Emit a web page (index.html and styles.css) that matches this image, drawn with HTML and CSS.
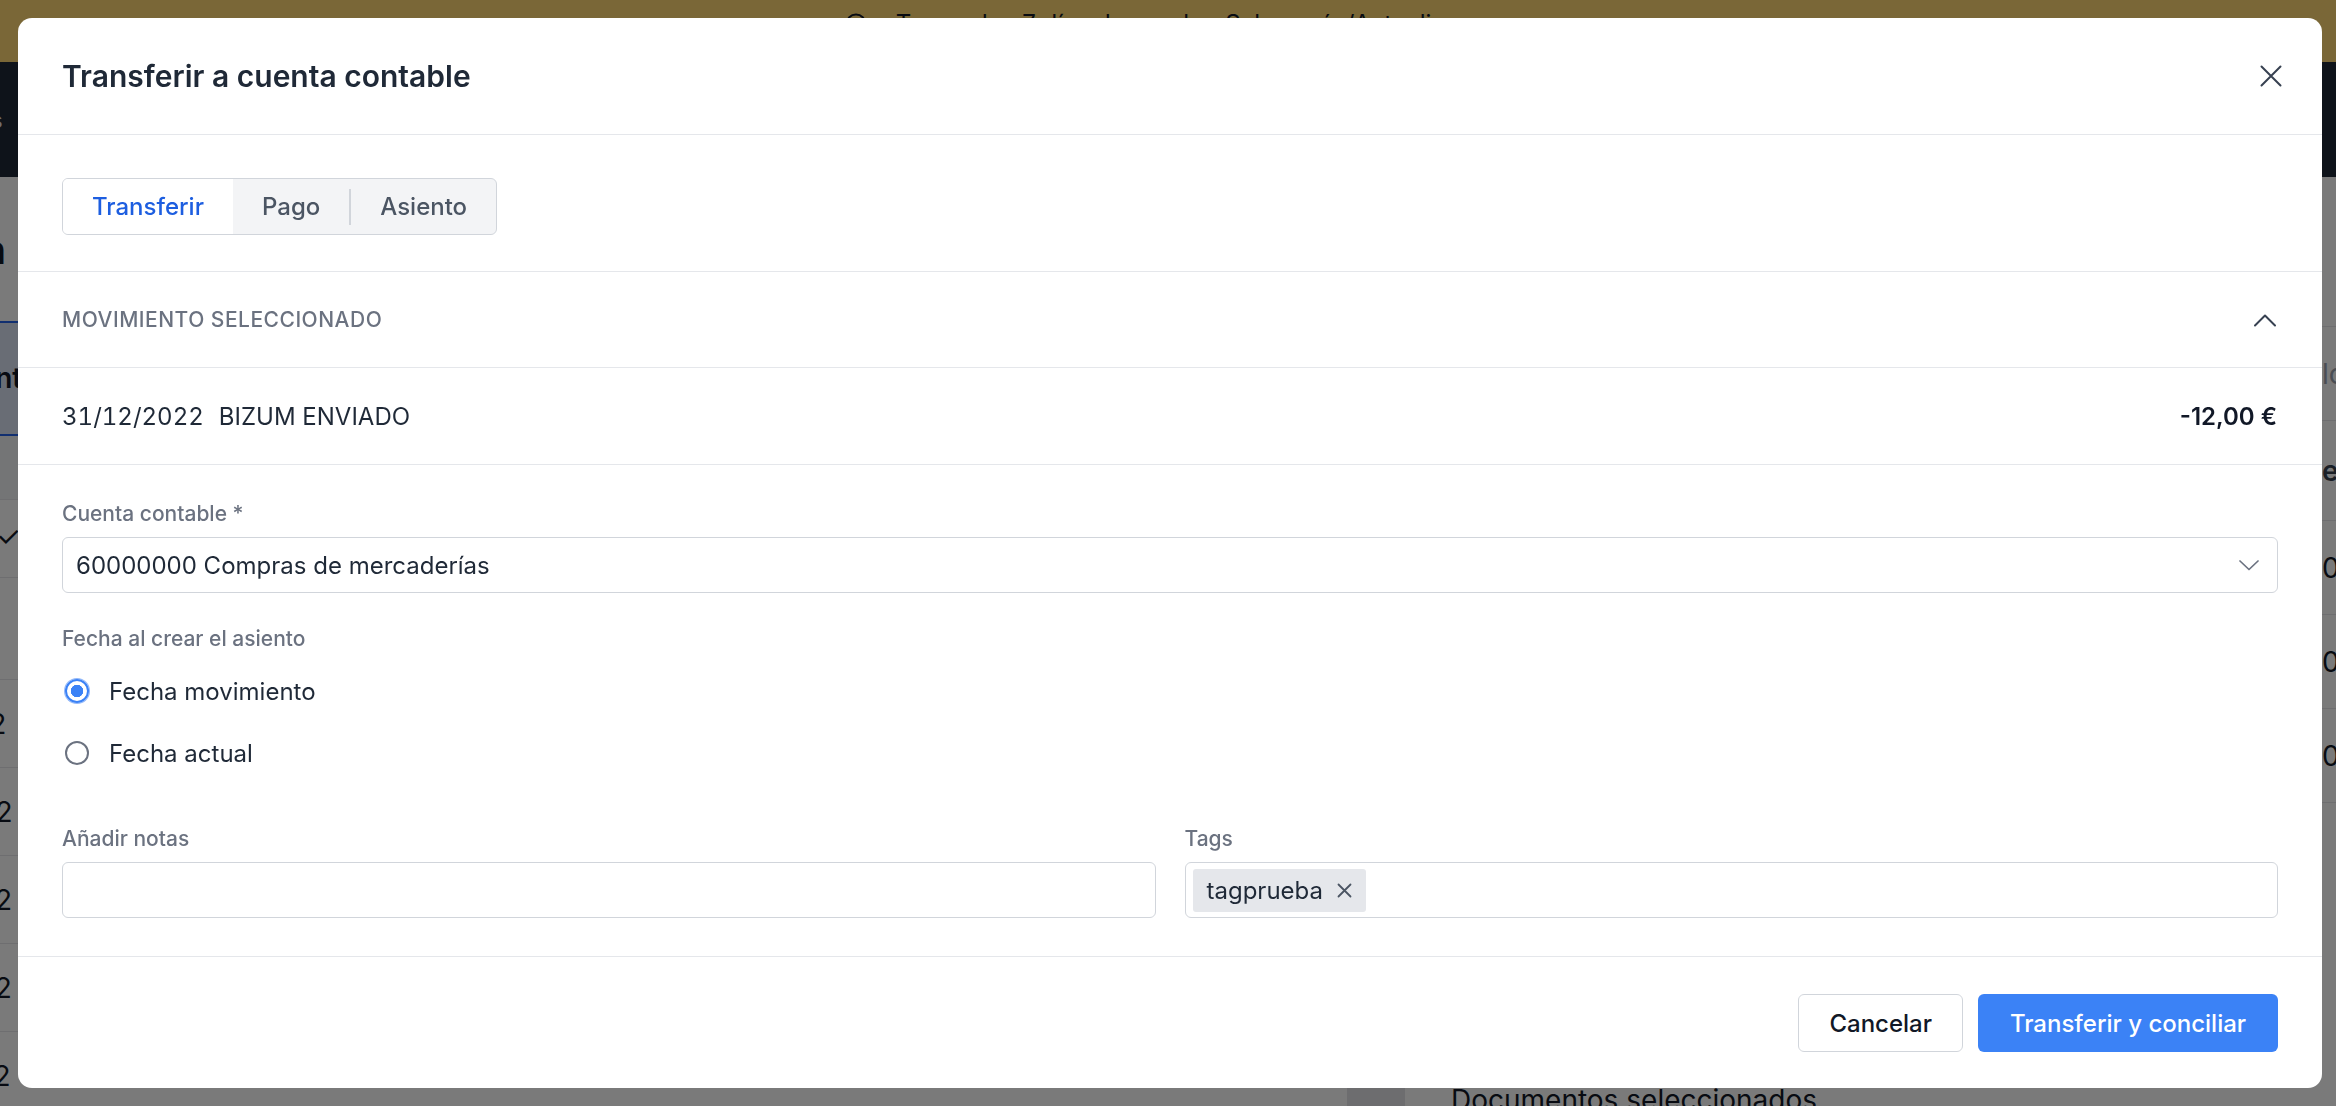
FILE: index.html
```html
<!DOCTYPE html>
<html lang="es">
<head>
<meta charset="UTF-8">
<meta name="viewport" content="width=device-width, initial-scale=1.0">
<title>Transferir a cuenta contable</title>
<link rel="stylesheet" href="styles.css">
</head>
<body>
    <!-- page behind the dialog -->
    <div class="page">
        <div class="banner">
            <svg class="banner-icon" width="22" height="22" viewBox="0 0 22 22"><circle cx="11" cy="11" r="9.5" fill="none" stroke="#111827" stroke-width="2"/></svg>
            <span>Te quedan 7 días de prueba. Saber más/Actualizar</span>
        </div>
        <nav class="topnav">
            <span class="nav-first">Movimientos</span>
            <span>Facturas</span>
            <span>Contabilidad</span>
        </nav>
        <div class="content">
            <div class="left-col">
                <h1 class="page-title"><span>Conciliación</span></h1>
                <div class="band">Movimient</div>
                <div class="row head"></div>
                <div class="row check">✓</div>
                <div class="row blank"></div>
                <div class="row">31/12/2022</div>
                <div class="row">30/12/2022</div>
                <div class="row">29/12/2022</div>
                <div class="row">28/12/2022</div>
                <div class="row">27/12/2022</div>
            </div>
            <div class="gutter"></div>
            <div class="right-col">
                <div class="rrow r1"></div>
                <div class="rrow r2 light">lc</div>
                <div class="rrow r3">er</div>
                <div class="rrow r4">00</div>
                <div class="rrow r4">00</div>
                <div class="rrow r4">00</div>
                <div class="docs">Documentos seleccionados</div>
            </div>
        </div>
    </div>

    <div class="overlay"></div>

    <div class="modal">
        <div class="modal-header">
            <h2>Transferir a cuenta contable</h2>
            <svg class="close" width="22" height="22" viewBox="0 0 22 22"><path d="M1.5 1.5 L20.5 20.5 M20.5 1.5 L1.5 20.5" stroke="#374151" stroke-width="2" stroke-linecap="round"/></svg>
        </div>

        <div class="tabs-section">
            <div class="tabs">
                <div class="tab active">Transferir</div>
                <div class="tab">Pago</div>
                <div class="tab-sep"></div>
                <div class="tab">Asiento</div>
            </div>
        </div>

        <div class="collapse-head">
            <span>Movimiento seleccionado</span>
            <svg width="24" height="14" viewBox="0 0 24 14"><polyline points="2,12.5 12,2.5 22,12.5" fill="none" stroke="#374151" stroke-width="2" stroke-linecap="round" stroke-linejoin="round"/></svg>
        </div>

        <div class="movement">
            <div><span class="date">31/12/2022</span>BIZUM ENVIADO</div>
            <div class="amount">-12,00 €</div>
        </div>

        <div class="form">
            <label class="field-label">Cuenta contable *</label>
            <div class="select">
                <span>60000000 Compras de mercaderías</span>
                <svg width="20" height="11" viewBox="0 0 20 11"><polyline points="1,1 10,9.5 19,1" fill="none" stroke="#6b7280" stroke-width="1.7" stroke-linecap="round" stroke-linejoin="round"/></svg>
            </div>

            <label class="field-label date-label">Fecha al crear el asiento</label>
            <div class="radio-list">
                <div class="radio-item"><span class="radio checked"></span>Fecha movimiento</div>
                <div class="radio-item"><span class="radio"></span>Fecha actual</div>
            </div>

            <div class="two-cols">
                <div>
                    <label class="field-label">Añadir notas</label>
                    <div class="input"></div>
                </div>
                <div>
                    <label class="field-label">Tags</label>
                    <div class="input tags">
                        <span class="chip">tagprueba
                            <svg width="15" height="15" viewBox="0 0 15 15"><path d="M1.5 1.5 L13.5 13.5 M13.5 1.5 L1.5 13.5" stroke="#4b5563" stroke-width="1.8" stroke-linecap="round"/></svg>
                        </span>
                    </div>
                </div>
            </div>
        </div>

        <div class="modal-footer">
            <button class="btn">Cancelar</button>
            <button class="btn primary">Transferir y conciliar</button>
        </div>
    </div>
</body>
</html>
```

FILE: styles.css
```css
body {
    font-family: Inter, Roboto, "Liberation Sans", Arial, sans-serif;
    margin: 0;
    padding: 0;
    color: #111827;
    overflow: hidden;
}

/* page under the dialog */
.page {
    height: 1106px;
    background-color: white;
}

.banner {
    height: 62px;
    box-sizing: border-box;
    padding: 6px 24px 0 0;
    background-color: #fed874;
    display: flex;
    justify-content: center;
    align-items: flex-start;
    gap: 29px;
    font-size: 24px;
    line-height: 36px;
}

.banner-icon {
    margin-top: 7px;
}

.topnav {
    height: 115px;
    background-color: #1f2937;
    color: #e5e7eb;
    display: flex;
    align-items: center;
    gap: 40px;
    font-size: 22px;
}

.nav-first {
    margin-left: -130px;
}

.content {
    display: flex;
}

.left-col {
    width: 1347px;
    flex-shrink: 0;
    overflow: hidden;
}

.page-title {
    margin: 0;
    width: 6px;
    height: 144px;
    display: flex;
    justify-content: flex-end;
    align-items: center;
    white-space: nowrap;
    font-size: 40px;
}

.band {
    height: 115px;
    box-sizing: border-box;
    background-color: #dbe4f5;
    border-top: 2px solid #2563eb;
    border-bottom: 2px solid #2563eb;
    font-size: 28px;
    font-weight: 600;
    line-height: 110px;
    margin-left: -120px;
}

.row {
    height: 88px;
    box-sizing: border-box;
    border-bottom: 1px solid #e5e7eb;
    font-size: 28px;
    line-height: 88px;
    margin-left: -140px;
}

.row.head {
    height: 64px;
    background-color: #f3f4f6;
}

.row.check {
    height: 78px;
    line-height: 72px;
    margin-left: -4px;
}

.row.blank {
    height: 102px;
}

.gutter {
    width: 58px;
    flex-shrink: 0;
    background-color: #e3e4e8;
}

.right-col {
    flex-grow: 1;
    min-width: 0;
}

.rrow {
    box-sizing: border-box;
    border-bottom: 1px solid #e5e7eb;
    padding-left: 917px;
    font-size: 28px;
    height: 94px;
    display: flex;
    align-items: center;
    white-space: nowrap;
}

.r1 { height: 150px; }
.r3 { height: 100px; font-weight: 600; color: #374151; }

.right-col .light {
    color: #9ca3af;
}

.docs {
    margin-top: 280px;
    padding-left: 46px;
    font-size: 28px;
    line-height: 34px;
    white-space: nowrap;
}

.overlay {
    position: fixed;
    inset: 0;
    background-color: rgba(0, 0, 0, 0.52);
}

/* dialog */
.modal {
    position: fixed;
    left: 18px;
    top: 18px;
    width: 2304px;
    height: 1070px;
    background-color: white;
    border-radius: 14px;
    display: flex;
    flex-direction: column;
    overflow: hidden;
}

.modal-header {
    height: 117px;
    box-sizing: border-box;
    padding: 0 40px 0 44px;
    display: flex;
    justify-content: space-between;
    align-items: center;
    border-bottom: 1px solid #e5e7eb;
}

.modal-header h2 {
    margin: 0;
    font-size: 30px;
    font-weight: 600;
    color: #1f2937;
}

.tabs-section {
    padding: 43px 44px 36px;
    border-bottom: 1px solid #e5e7eb;
}

.tabs {
    display: inline-flex;
    align-items: center;
    height: 57px;
    box-sizing: border-box;
    border: 1.5px solid #d1d5db;
    border-radius: 6px;
    background-color: #f3f4f6;
    overflow: hidden;
}

.tab {
    height: 100%;
    display: flex;
    align-items: center;
    padding: 0 29px;
    font-size: 24px;
    font-weight: 500;
    color: #4b5563;
}

.tab.active {
    background-color: white;
    color: #1d5ee0;
}

.tab-sep {
    width: 2px;
    height: 36px;
    background-color: #d1d5db;
}

.collapse-head {
    height: 95px;
    padding: 0 45px 0 44px;
    display: flex;
    justify-content: space-between;
    align-items: center;
    border-bottom: 1px solid #e5e7eb;
}

.collapse-head span {
    text-transform: uppercase;
    font-size: 21px;
    font-weight: 500;
    letter-spacing: 0.5px;
    color: #6b7280;
}

.movement {
    height: 96px;
    padding: 0 45px 0 44px;
    display: flex;
    justify-content: space-between;
    align-items: center;
    border-bottom: 1px solid #e5e7eb;
    font-size: 24px;
    color: #1f2937;
}

.movement .date {
    margin-right: 15px;
    font-variant-numeric: tabular-nums;
}

.amount {
    font-weight: 600;
    color: #111827;
}

.form {
    padding: 33px 44px 30px;
    flex-grow: 1;
    border-bottom: 1px solid #e5e7eb;
}

.field-label {
    display: block;
    font-size: 21px;
    line-height: 31px;
    font-weight: 500;
    color: #6b7280;
    margin-bottom: 8px;
}

.select {
    height: 56px;
    box-sizing: border-box;
    border: 1.5px solid #d1d5db;
    border-radius: 6px;
    padding: 0 18px 0 13px;
    display: flex;
    justify-content: space-between;
    align-items: center;
    font-size: 24px;
    color: #1f2937;
}

.date-label {
    margin-top: 30px;
}

.radio-list {
    display: flex;
    flex-direction: column;
    gap: 26px;
    margin-top: 19px;
}

.radio-item {
    display: flex;
    align-items: center;
    height: 36px;
    font-size: 24px;
    color: #1f2937;
    padding-left: 3px;
}

.radio {
    width: 24px;
    height: 24px;
    box-sizing: border-box;
    border: 2px solid #6b7280;
    border-radius: 50%;
    margin-right: 20px;
}

.radio.checked {
    border: 2px solid #3b82f6;
    background: radial-gradient(circle, #3b82f6 0 6px, white 6.5px);
    box-shadow: 0 0 0 1px #93b8f9;
}

.two-cols {
    display: grid;
    grid-template-columns: 1fr 1fr;
    gap: 29px;
    margin-top: 52px;
}

.input {
    height: 56px;
    box-sizing: border-box;
    border: 1.5px solid #d1d5db;
    border-radius: 6px;
}

.tags {
    display: flex;
    align-items: center;
    padding-left: 7px;
}

.chip {
    display: inline-flex;
    align-items: center;
    gap: 14px;
    height: 43px;
    padding: 0 14px;
    background-color: #e5e7eb;
    border-radius: 3px;
    font-size: 24px;
    color: #1f2937;
}

.modal-footer {
    padding: 37px 44px 36px;
    display: flex;
    justify-content: flex-end;
    gap: 15px;
}

.btn {
    height: 58px;
    padding: 0 30px;
    font-family: Inter, Roboto, "Liberation Sans", Arial, sans-serif;
    font-size: 24px;
    font-weight: 500;
    border-radius: 6px;
    border: 1.5px solid #d1d5db;
    background-color: white;
    color: #111827;
    cursor: pointer;
}

.btn.primary {
    width: 300px;
    border: none;
    background-color: #3b82f6;
    color: white;
}
```
